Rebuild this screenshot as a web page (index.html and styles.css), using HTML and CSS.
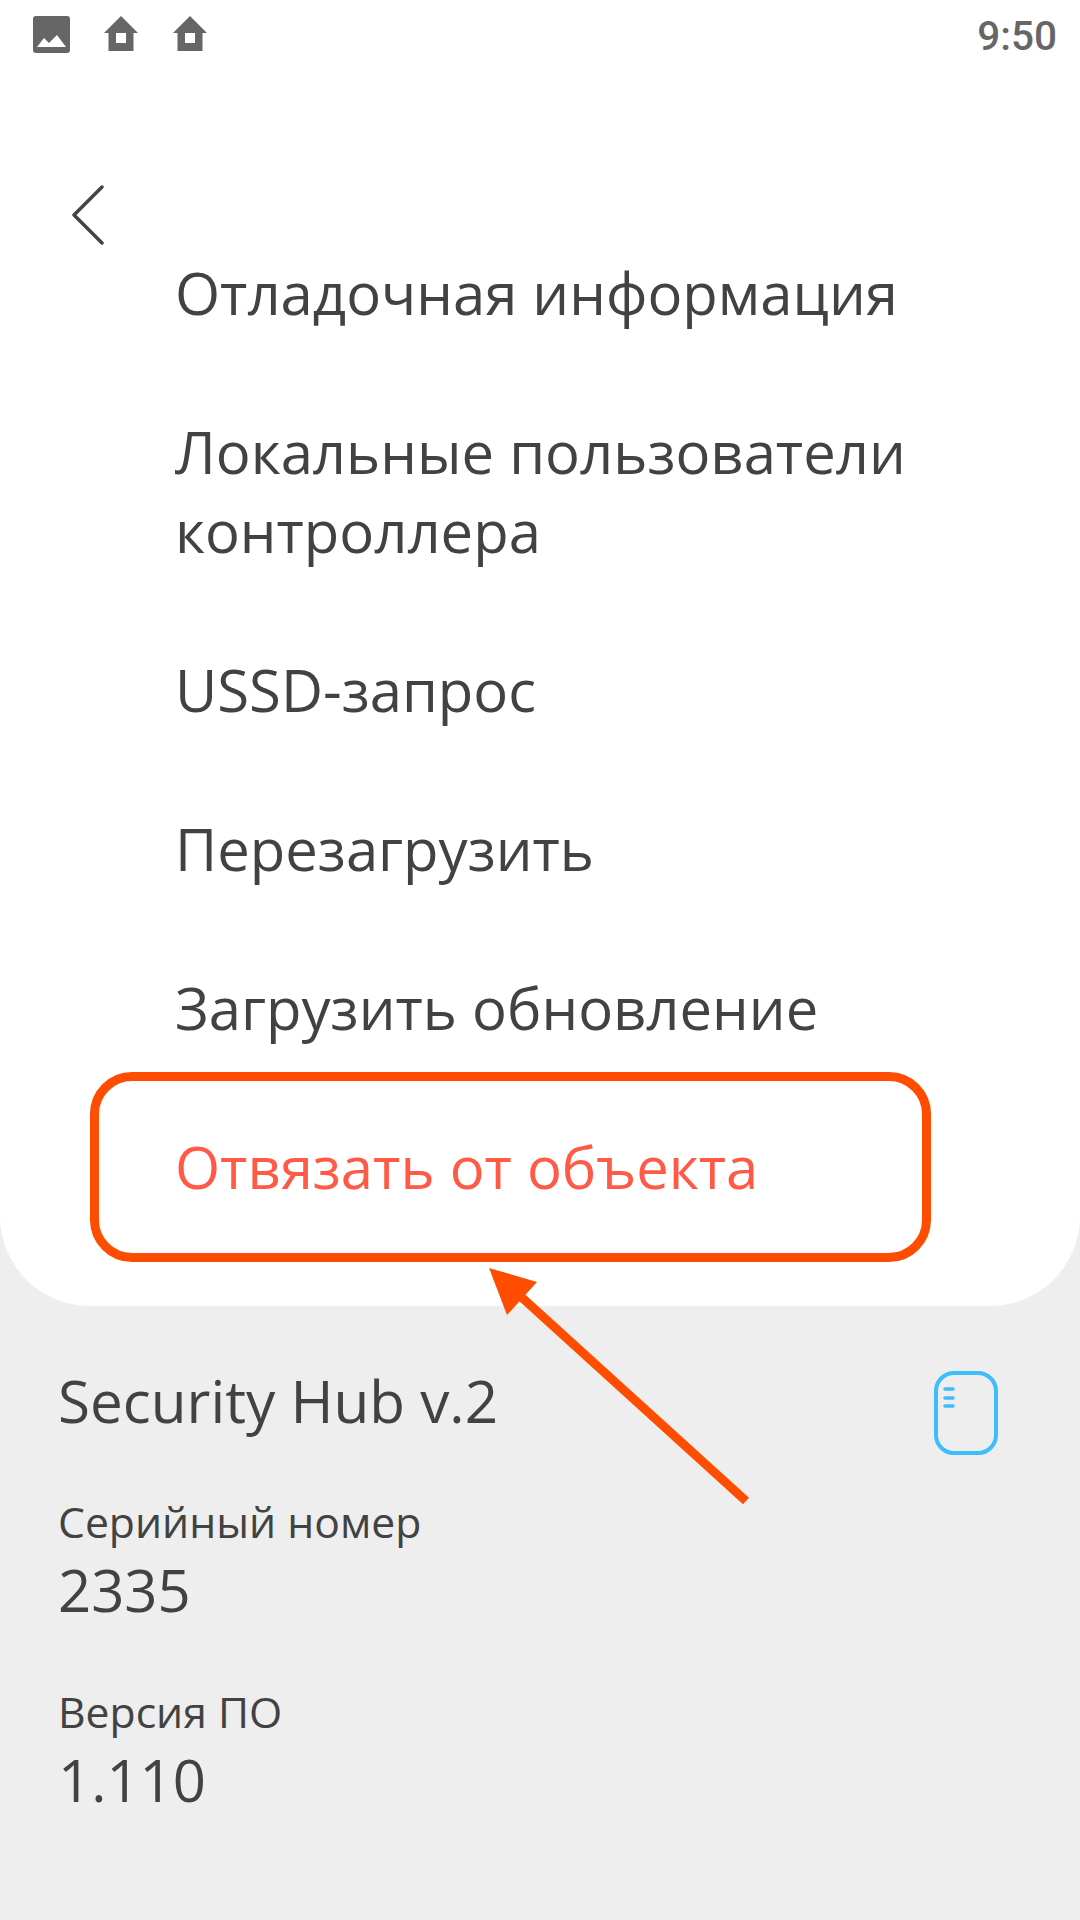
FILE: index.html
```html
<!DOCTYPE html>
<html lang="ru">
<head>
	<meta charset="utf-8">
	<title>Security Hub v.2</title>
	<link rel="stylesheet" href="styles.css">
</head>
<body>
	<div class="sheet">
		<div class="status">
			<div class="statusIcons">
				<svg class="sIcon" width="37" height="37" viewBox="0 0 37 37">
					<rect width="37" height="37" rx="3" fill="#666"/>
					<path d="M4 31 L11 22 L16 27 L24 19 L33 31 Z" fill="#fff"/>
				</svg>
				<svg class="sIcon" width="36" height="36" viewBox="0 0 36 36">
					<path fill-rule="evenodd" d="M18 0 L35 17 L30.500 17 L30.500 35 L5.500 35 L5.500 17 L1 17 Z M13 17 L13 27 L23 27 L23 17 Z" fill="#666"/>
				</svg>
				<svg class="sIcon" width="36" height="36" viewBox="0 0 36 36">
					<path fill-rule="evenodd" d="M18 0 L35 17 L30.500 17 L30.500 35 L5.500 35 L5.500 17 L1 17 Z M13 17 L13 27 L23 27 L23 17 Z" fill="#666"/>
				</svg>
			</div>
			<span class="time">9:50</span>
		</div>
		<div class="back">
			<svg width="36" height="60" viewBox="0 0 36 60">
				<path d="M32 2 L4 30 L32 58" fill="none" stroke="#444" stroke-width="3.500" stroke-linecap="round" stroke-linejoin="round"/>
			</svg>
		</div>
		<ul class="menu">
			<li>Отладочная информация</li>
			<li>Локальные пользователи контроллера</li>
			<li>USSD-запрос</li>
			<li>Перезагрузить</li>
			<li>Загрузить обновление</li>
			<li class="danger">Отвязать от объекта</li>
		</ul>
	</div>
	<div class="info">
		<div class="device">
			<span class="deviceName">Security Hub v.2</span>
			<svg class="hubIcon" width="64" height="84" viewBox="0 0 64 84">
				<rect x="2" y="2" width="60" height="80" rx="18" fill="none" stroke="#3dbdfb" stroke-width="4"/>
				<path d="M11 18 H19 M11 27 H19 M11 35 H19" stroke="#3dbdfb" stroke-width="3.500" stroke-linecap="round"/>
			</svg>
		</div>
		<div class="field">
			<div class="fieldName">Серийный номер</div>
			<div class="fieldValue">2335</div>
		</div>
		<div class="field">
			<div class="fieldName">Версия ПО</div>
			<div class="fieldValue">1.110</div>
		</div>
	</div>
	<!-- рамка и стрелка поверх скриншота -->
	<div class="mark"></div>
	<svg class="arrow" width="1080" height="1920" viewBox="0 0 1080 1920">
		<path d="M746 1501 L518 1294" stroke="#ff4d00" stroke-width="9" fill="none"/>
		<path d="M489 1268 L537 1282 L507 1315 Z" fill="#ff4d00"/>
	</svg>
</body>
</html>
```

FILE: styles.css
```css
*{
	margin: 0;
	padding: 0;
	box-sizing: border-box;
}
html,
body{
	height: 100%;
}
body{
	position: relative;
	overflow: hidden;
	background: #eeeeee;
	color: #424242;
	font-family: "Open Sans", "Noto Sans", sans-serif;
}
.sheet{
	height: 1306px;
	background: #fff;
	border-radius: 0 0 90px 90px;
}
.status{
	height: 72px;
	padding: 16px 23px 0 33px;
	display: flex;
	justify-content: space-between;
	align-items: flex-start;
}
.statusIcons{
	display: flex;
	gap: 33px;
	align-items: flex-start;
}
.sIcon{
	display: block;
}
.time{
	margin-top: -3px;
	font-family: Roboto, sans-serif;
	font-size: 40.500px;
	font-weight: 500;
	line-height: 46px;
	color: #666;
}
.back{
	height: 141px;
	padding: 113px 0 0 70px;
}
.menu{
	list-style: none;
	padding: 0 120px 0 175px;
}
.menu li{
	padding: 40px 0;
	font-size: 58px;
	line-height: 79px;
}
.menu .danger{
	color: #ff5a45;
}
.info{
	padding: 57px 82px 0 58px;
}
.device{
	display: flex;
	justify-content: space-between;
	align-items: flex-start;
	margin-bottom: 37px;
}
.deviceName{
	font-size: 58.400px;
	line-height: 76px;
}
.hubIcon{
	margin-top: 8px;
}
.field{
	margin-bottom: 54px;
}
.fieldName{
	font-size: 42.700px;
	line-height: 60px;
}
.fieldValue{
	font-size: 58px;
	line-height: 76px;
}
.mark{
	position: absolute;
	left: 90px;
	top: 1072px;
	width: 841px;
	height: 190px;
	border: 9px solid #ff4d00;
	border-radius: 42px;
}
.arrow{
	position: absolute;
	left: 0;
	top: 0;
}
```
